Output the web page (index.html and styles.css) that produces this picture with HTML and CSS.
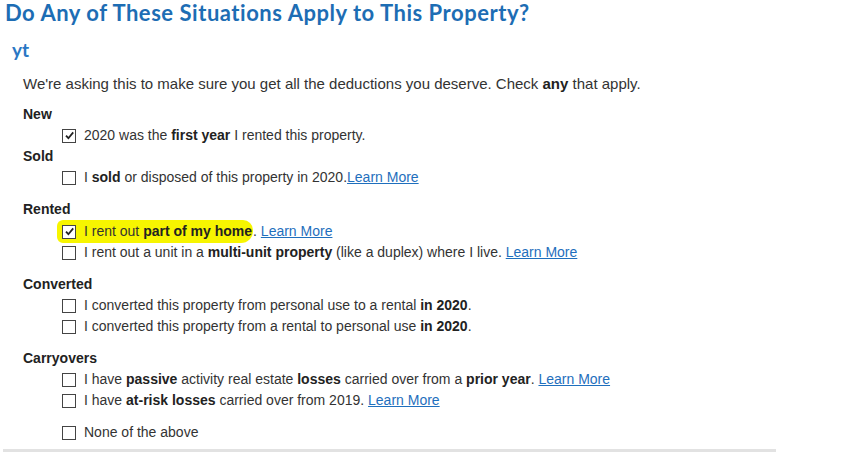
FILE: index.html
```html
<!DOCTYPE html>
<html>
<head>
<meta charset="utf-8">
<link rel="stylesheet" href="styles.css">
</head>
<body>
<div class="page">
  <h1 class="title">Do Any of These Situations Apply to This Property?</h1>
  <h2 class="subtitle">yt</h2>
  <div class="content">
    <p class="intro">We're asking this to make sure you get all the deductions you deserve. Check <b>any</b> that apply.</p>

    <div class="group first">
      <div class="label">New</div>
      <div class="row"><span class="box checked"><svg viewBox="0 0 13 13" width="13" height="13"><path d="M3 6.6 L5.4 9.2 L10.2 3.4" fill="none" stroke="#222" stroke-width="1.8"/></svg></span><span>2020 was the <b>first year</b> I rented this property.</span></div>
    </div>

    <div class="group tight">
      <div class="label">Sold</div>
      <div class="row"><span class="box"></span><span>I <b>sold</b> or disposed of this property in 2020.<a href="#">Learn More</a></span></div>
    </div>

    <div class="group">
      <div class="label">Rented</div>
      <div class="row tall"><span class="hl"><span class="box checked"><svg viewBox="0 0 13 13" width="13" height="13"><path d="M3 6.6 L5.4 9.2 L10.2 3.4" fill="none" stroke="#222" stroke-width="1.8"/></svg></span><span>I rent out <b>part of my home</b></span></span><span>. <a href="#">Learn More</a></span></div>
      <div class="row"><span class="box"></span><span>I rent out a unit in a <b>multi-unit property</b> (like a duplex) where I live. <a href="#">Learn More</a></span></div>
    </div>

    <div class="group">
      <div class="label">Converted</div>
      <div class="row"><span class="box"></span><span>I converted this property from personal use to a rental <b>in 2020</b>.</span></div>
      <div class="row"><span class="box"></span><span>I converted this property from a rental to personal use <b>in 2020</b>.</span></div>
    </div>

    <div class="group">
      <div class="label">Carryovers</div>
      <div class="row"><span class="box"></span><span>I have <b>passive</b> activity real estate <b>losses</b> carried over from a <b>prior year</b>. <a href="#">Learn More</a></span></div>
      <div class="row"><span class="box"></span><span>I have <b>at-risk losses</b> carried over from 2019. <a href="#">Learn More</a></span></div>
    </div>

    <div class="group">
      <div class="row"><span class="box"></span><span>None of the above</span></div>
    </div>
  </div>
  <div class="rule"></div>
</div>
</body>
</html>
```

FILE: styles.css
```css
html, body {
  margin: 0;
  padding: 0;
  background: #ffffff;
}

.page {
  width: 865px;
  height: 455px;
  overflow: hidden;
  font-family: "Liberation Sans", Arial, sans-serif;
  color: #333333;
}

.title {
  margin: 0;
  padding: 1px 0 0 5px;
  font-family: Lato, "Open Sans", sans-serif;
  font-weight: 700;
  font-size: 22px;
  letter-spacing: 0.53px;
  line-height: 24px;
  color: #1d6db4;
  white-space: nowrap;
}

.subtitle {
  margin: 14px 0 0 12px;
  font-family: Lato, "Open Sans", sans-serif;
  font-weight: 700;
  font-size: 19px;
  line-height: 22px;
  color: #2a77c4;
}

.content {
  padding-left: 23px;
}

.intro {
  margin: 13px 0 0 0;
  font-size: 15px;
  line-height: 20px;
  white-space: nowrap;
}

.intro b {
  color: #222;
}

.group {
  margin-top: 11px;
}

.group.first {
  margin-top: 10px;
}

.group.tight {
  margin-top: 0;
}

.label {
  font-size: 14px;
  font-weight: 700;
  line-height: 21px;
  color: #222;
}

.row {
  display: flex;
  align-items: center;
  height: 21px;
  padding-left: 39px;
  font-size: 14px;
  line-height: 21px;
  white-space: nowrap;
}

.row.tall {
  height: 22px;
  align-items: flex-start;
}

.row b {
  color: #222;
}

.box {
  flex: none;
  display: inline-flex;
  width: 12px;
  height: 12px;
  border: 1px solid #444;
  background: #fff;
  margin-right: 8px;
  box-sizing: content-box;
}

.box svg {
  display: block;
  margin: -0.5px;
}

.hl {
  display: inline-flex;
  align-items: center;
  background: #f7f500;
  margin-left: -5px;
  padding: 1px 1px 1px 5px;
  border-radius: 6px 10px 12px 6px;
  height: 21px;
}

.row.tall > span:last-child {
  line-height: 23px;
}

a {
  color: #1f6fbd;
  text-decoration: underline;
}

.rule {
  margin: 6px 0 0 3px;
  width: 773px;
  height: 3px;
  background: #e2e2e2;
}
```
